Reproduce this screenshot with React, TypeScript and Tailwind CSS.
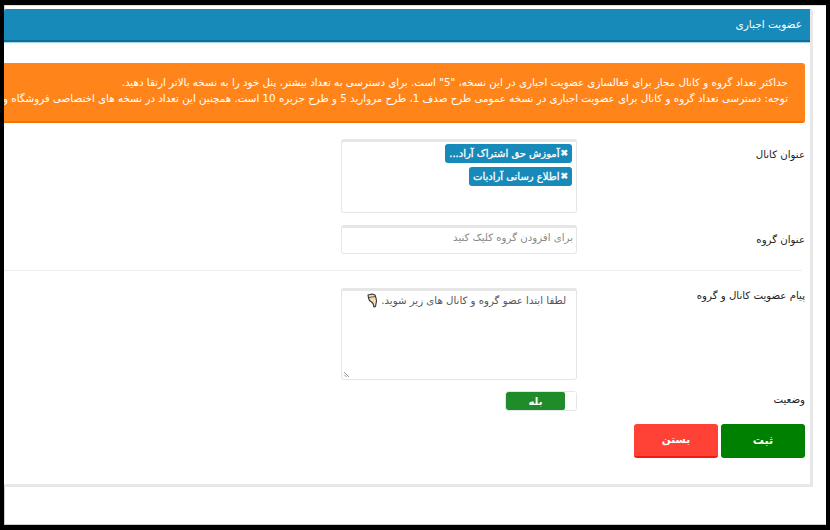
const fontStack = "font-['DejaVu_Sans',sans-serif]";

const HandIcon = () => (
  <svg width="11" height="15" viewBox="0 0 11 15" className="inline-block align-[-4px]">
    <path
      d="M1 2 L5 1 L8 2 L9 5 L9.5 8 L8.5 13.5 L7 14 L6 10.5 L4.5 9 L2.5 7.5 L1.5 5 Z"
      fill="#f7dcb4"
      stroke="#333"
      strokeWidth="1.1"
      strokeLinejoin="round"
    />
    <path d="M1.5 4.5 L8.5 3.5" stroke="#333" strokeWidth="0.8" fill="none" />
  </svg>
);

const Tag = ({ label }: { label: string }) => (
  <span className="inline-flex h-[19px] items-center rounded-[3px] bg-[#178ab9] px-1 text-[10px] leading-none text-white [-webkit-text-stroke:0.3px_white]">
    <span className="ml-px text-[9px]">✖</span>
    <span>{label}</span>
  </span>
);

const Label = ({ children, className = "" }: { children: React.ReactNode; className?: string }) => (
  <label className={`w-[228px] shrink-0 text-[10.2px] text-[#222] ${className}`}>{children}</label>
);

export default function App() {
  return (
    <div className="h-[530px] w-[830px] overflow-hidden bg-black pb-[5px] pl-[4px] pr-[4px] pt-[5px]">
      <div
        dir="rtl"
        className={`h-[520px] overflow-hidden bg-white pb-px pt-[4px] pr-[13px] shadow-[inset_1px_0_0_#ccc,inset_0_-1px_0_#ccc,inset_0_1px_0_#ddd] ${fontStack}`}
      >
        {/* panel */}
        <div className="h-[478px] w-[809px] overflow-hidden rounded-t-[2px] border-b-[3px] border-r-[3px] border-[#e8e8e8] bg-white">
          <div className="-mr-[3px] flex h-[33px] items-center border-b-2 border-[#0f6f9a] bg-[#178ab9] pr-[11px] text-[10.5px] text-white shadow-[0_1px_0_#9fd3e8]">
            عضویت اجباری
          </div>

          <div className="pr-[5px]">
            {/* alert */}
            <div className="mt-[21px] h-[60px] w-[801px] overflow-hidden whitespace-nowrap rounded-r-[3px] border-b-[2px] border-[#f57200] bg-[#ff851b] pb-[10px] pr-[17px] pt-[12px] text-[10.3px] leading-[15.5px] text-white">
              <div>حداکثر تعداد گروه و کانال مجاز برای فعالسازی عضویت اجباری در این نسخه، "5" است. برای دسترسی به تعداد بیشتر، پنل خود را به نسخه بالاتر ارتقا دهید.</div>
              <div>توجه: دسترسی تعداد گروه و کانال برای عضویت اجباری در نسخه عمومی طرح صدف 1، طرح مروارید 5 و طرح جزیره 10 است. همچنین این تعداد در نسخه های اختصاصی فروشگاه و</div>
            </div>

            {/* channel */}
            <div className="mt-4 flex">
              <Label className="pt-[8px]">عنوان کانال</Label>
              <div className="flex h-[74px] w-[236px] flex-col items-start gap-[4px] rounded-[3px] border border-t-[3px] border-[#e6e6e6] pr-[4px] pt-[2px]">
                <Tag label="آموزش حق اشتراک آراد..." />
                <Tag label="اطلاع رسانی آرادبات" />
              </div>
            </div>

            {/* group */}
            <div className="mt-[12px] flex">
              <Label className="pt-[7px]">عنوان گروه</Label>
              <div className="h-[29px] w-[236px] rounded-[3px] border border-t-[3px] border-[#e6e6e6] pr-[3px] pt-[2px] text-[10.2px] text-[#888]">
                برای افزودن گروه کلیک کنید
              </div>
            </div>

            <div className="mr-[3px] mt-[16px] w-[798px] border-t border-[#eeeeee]" />

            {/* message */}
            <div className="mt-[17px] flex">
              <Label>پیام عضویت کانال و گروه</Label>
              <div className="relative h-[92px] w-[236px] rounded-[3px] border border-t-[3px] border-[#e6e6e6] pr-[10px] pt-[2px] text-[10.2px] text-[#555]">
                لطفا ابتدا عضو گروه و کانال های زیر شوید. <HandIcon />
                <svg width="7" height="7" viewBox="0 0 7 7" className="absolute bottom-[1px] left-[1px]">
                  <path d="M1 1 L6 6 M1 3.5 L3.5 6" stroke="#999" strokeWidth="1" />
                </svg>
              </div>
            </div>

            {/* status */}
            <div className="mt-[11px] flex">
              <Label className="pt-px">وضعیت</Label>
              <div className="flex h-[20px] w-[72px] overflow-hidden rounded-[3px] border border-[#e6e6e6]">
                <span className="w-[11px] bg-white" />
                <span className="flex flex-1 items-center justify-center rounded-[2px] bg-[#1f8c2a] text-[10px] font-bold text-white">بله</span>
              </div>
            </div>

            {/* actions */}
            <div className="mt-[13px] flex gap-[3px]">
              <button className="h-[34px] w-[84px] rounded-[3px] bg-[#008000] text-[11px] font-bold text-white">ثبت</button>
              <button className="h-[34px] w-[84px] rounded-[3px] border-b-2 border-[#f01a10] bg-[#ff4136] text-[10.5px] font-bold text-white">بستن</button>
            </div>
          </div>
        </div>
      </div>
    </div>
  );
}
